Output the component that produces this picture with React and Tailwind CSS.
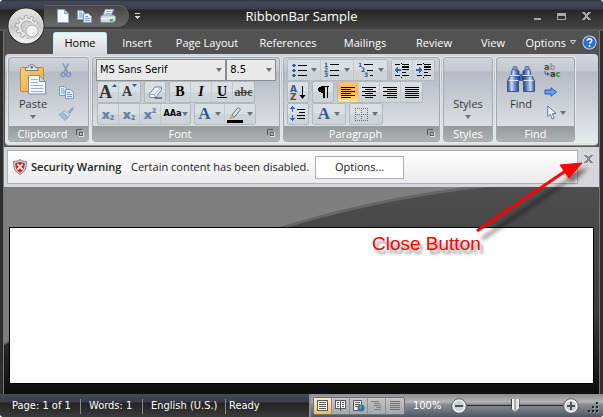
import React from "react";

const UI = "font-['Open_Sans','Noto_Sans',sans-serif]";
const PLAIN = "font-['DejaVu_Sans_Condensed','DejaVu_Sans',sans-serif]";
const SERIF = "font-['Liberation_Serif',serif]";

/* ---------- small building blocks ---------- */

function Arrow({ className = "fill-[#6b7076]" }) {
  return (
    <svg width="6" height="4" viewBox="0 0 6 4" className={className}>
      <path d="M0 0h6L3 4z" />
    </svg>
  );
}

function Bars({ rows, color = "#000" }) {
  return rows.map(([x, y, w]) => (
    <rect key={`${x}-${y}`} x={x} y={y} width={w} height="1" fill={color} />
  ));
}

function Crisp({ w, h, children }) {
  return (
    <svg width={w} height={h} viewBox={`0 0 ${w} ${h}`} shapeRendering="crispEdges">
      {children}
    </svg>
  );
}

function Cluster({ children }) {
  return (
    <div className="flex h-[22px] divide-x divide-[#c3cacd] rounded-[2px] border border-[#b3babf] bg-linear-to-b from-[#d9dfe2] from-50% to-[#cdd5d8] to-50%">
      {children}
    </div>
  );
}

function Tool({ label, width = "w-[21px]", active = false, children }) {
  return (
    <button
      type="button"
      aria-label={label}
      aria-pressed={active}
      className={`flex h-5 items-center justify-center gap-1 ${width} ${
        active ? "bg-linear-to-b from-[#fbc27c] via-[#fdb259] to-[#ffe68f]" : ""
      }`}
    >
      {children}
    </button>
  );
}

function Launcher({ label }) {
  return (
    <button type="button" aria-label={label} className="absolute right-1 top-[3px]">
      <Crisp w={8} h={8}>
        <path d="M0 0h6v1H1v5H0z" fill="#5b5f61" />
        <path d="M3 3h5v5H3z" fill="#e5e8e8" />
        <path d="M3 3h4v4H3z" fill="#5b5f61" />
        <path d="M4 4h2v2H4z" fill="#b9bcbc" />
      </Crisp>
    </button>
  );
}

function Group({ title, width, launcher, children }) {
  return (
    <section
      aria-label={title}
      className={`flex h-[85px] shrink-0 flex-col overflow-hidden rounded-[3px] border border-[#a3a8ad] shadow-[0_0_0_1px_#e4e7ea] ${width}`}
    >
      <div className="flex-1">{children}</div>
      <div className="relative flex h-[15px] items-center justify-center bg-linear-to-b from-[#979a9a] to-[#aeb1b1] text-[11px] leading-[15px] text-white">
        <span className={launcher ? "pr-3" : ""}>{title}</span>
        {launcher && <Launcher label={`${title} settings`} />}
      </div>
    </section>
  );
}

/* ---------- drawings ---------- */

function Orb() {
  return (
    <svg width="38" height="38" viewBox="0 0 38 38">
      <defs>
        <linearGradient id="orb" x1="0" y1="0" x2="0" y2="1">
          <stop offset="0" stopColor="#e4e4e4" />
          <stop offset=".48" stopColor="#cdcdcd" />
          <stop offset=".52" stopColor="#c4c4c4" />
          <stop offset="1" stopColor="#f6f6f6" />
        </linearGradient>
      </defs>
      <circle cx="19" cy="19" r="18.5" fill="#2a2a2a" />
      <circle cx="19" cy="19" r="17" fill="url(#orb)" stroke="#f4f4f4" />
      <circle cx="20" cy="20" r="9.500" fill="none" stroke="#9a9a9a" strokeWidth="4.500" strokeDasharray="3 2.970" />
      <circle cx="20" cy="20" r="7.500" fill="none" stroke="#9a9a9a" strokeWidth="3.500" />
      <circle cx="20" cy="20" r="9.500" fill="none" stroke="#ececec" strokeWidth="3.200" strokeDasharray="2 3.970" strokeDashoffset="-.5" />
      <circle cx="20" cy="20" r="7.500" fill="none" stroke="#ececec" strokeWidth="2" />
      <circle cx="25" cy="24" r="8" fill="#d6d6d6" />
      <circle cx="25" cy="24" r="6" fill="#f3f3f3" stroke="#9a9a9a" strokeWidth=".8" />
    </svg>
  );
}

function PageIcon() {
  return (
    <svg width="12" height="14" viewBox="0 0 12 14">
      <path d="M.5.5h7l4 4v9H.5z" fill="#f5f8fd" stroke="#8ea3bd" />
      <path d="M7.5.5v4h4z" fill="#c3d0e2" stroke="#8ea3bd" />
    </svg>
  );
}

function CopyIcon() {
  return (
    <svg width="15" height="13" viewBox="0 0 15 13">
      <path d="M.5.5h5l2.500 2.500v6.500H.5z" fill="#e6edf8" stroke="#7f98c2" />
      <path d="M2 3h3M2 5h4M2 7h4" stroke="#7f98c2" />
      <path d="M6.500 3.500h5l3 3v6h-8z" fill="#e6edf8" stroke="#7f98c2" />
      <path d="M8 6.500h3M8 8.500h5M8 10.500h5" stroke="#7f98c2" />
    </svg>
  );
}

function PrinterIcon() {
  return (
    <svg width="16" height="14" viewBox="0 0 16 14">
      <path d="M5.500.5h8l-2.500 6H3z" fill="#f7f9fc" stroke="#9fb0c6" />
      <path d="M6.500 2.500h5M5.500 4.500h5" stroke="#8aa0be" />
      <path d="M2.500 6h11l2 2v3.500L13 13.500H1.500l-1-1V8z" fill="#cfd8e4" stroke="#8294ab" />
      <path d="M1 9.500h12l2-2" fill="none" stroke="#f5f8fb" />
      <rect x="10" y="10" width="3" height="2.500" fill="#26c51c" />
    </svg>
  );
}

function PasteIcon() {
  return (
    <svg width="28" height="31" viewBox="0 0 28 31">
      <defs>
        <linearGradient id="board" x1="0" y1="0" x2="1" y2="1">
          <stop offset="0" stopColor="#f8cf7c" />
          <stop offset="1" stopColor="#e8a93c" />
        </linearGradient>
      </defs>
      <rect x="1.500" y="3.500" width="23" height="24" rx="1.500" fill="url(#board)" stroke="#c08a37" />
      <path d="M6.500 6.500V4l3-1c.5-3.300 6-3.300 6.500 0l3 1v2.500z" fill="#dfe3e8" stroke="#6e7680" />
      <circle cx="12.800" cy="3.200" r="1.200" fill="#555c66" />
      <path d="M9.500 11.500h11l6 6v12.500h-17z" fill="#f7f9fc" stroke="#7f8ea6" />
      <path d="M20.500 11.500v6h6z" fill="#cbd7e8" stroke="#7f8ea6" />
      <path d="M12 15.500h7M12 18.500h7M12 21.500h12M12 24.500h12M12 27.500h12" stroke="#9fb3d2" />
    </svg>
  );
}

function CutIcon() {
  return (
    <svg width="12" height="15" viewBox="0 0 12 15" fill="none" stroke="#8195b8">
      <path d="M3 .5 7.500 9.500M8.500.5 4 9.500" strokeWidth="1.600" />
      <circle cx="3" cy="11.500" r="2" strokeWidth="1.500" />
      <circle cx="8.500" cy="11.500" r="2" strokeWidth="1.500" />
    </svg>
  );
}

function BrushIcon() {
  return (
    <svg width="16" height="14" viewBox="0 0 16 14">
      <path d="M10.500 4.500 14.500.5l1 1-3.500 4.500z" fill="#9fb1cf" stroke="#7d92b8" />
      <path d="M6 3.500 12 8l-1.500 2L4.500 5.500z" fill="#dfe7f4" stroke="#7d92b8" strokeWidth=".8" />
      <path d="M4.500 5.500 10.500 10 7 13.500.5 7.500z" fill="#a9badb" stroke="#8ea3c8" strokeWidth=".8" />
    </svg>
  );
}

function Binoculars() {
  const side = (
    <>
      <path d="M5 3.500 9 3l3 2v7H3.500z" fill="url(#tube)" stroke="#304a80" strokeWidth=".7" />
      <rect x="6" y=".5" width="4" height="3.500" rx="1.200" fill="#7f9fd8" stroke="#304a80" strokeWidth=".6" />
      <path d="M3 10h9.500v4L11.500 15v10.500h-11V15z" fill="url(#tube)" stroke="#2a4377" strokeWidth=".8" />
      <path d="M3 9.500h9.500M1.500 14.500h10" stroke="#dbe6f8" strokeWidth="1" />
    </>
  );
  return (
    <svg width="28" height="27" viewBox="0 0 28 27">
      <defs>
        <linearGradient id="tube">
          <stop offset="0" stopColor="#31508f" />
          <stop offset=".35" stopColor="#c9daf5" />
          <stop offset=".65" stopColor="#5d82c4" />
          <stop offset="1" stopColor="#22396c" />
        </linearGradient>
      </defs>
      <rect x="11" y="8" width="6" height="7" fill="#4267ab" />
      {side}
      <g transform="translate(28 0) scale(-1 1)">{side}</g>
    </svg>
  );
}

function Shield() {
  return (
    <svg width="14" height="16" viewBox="0 0 14 16">
      <path d="M7 .5C9 2 11 2.500 13.500 2.500c0 6-1 10-6.500 13C1.500 12.500.5 8.500.5 2.500 3 2.500 5 2 7 .5z" fill="#d9dcdf" stroke="#7b7f83" />
      <path d="M7 2.500c1.600 1 3 1.300 4.800 1.400C11.700 8.500 10.800 11.500 7 13.800 3.200 11.500 2.300 8.500 2.200 3.900 4 3.800 5.400 3.500 7 2.500z" fill="#d12a22" />
      <path d="m4.300 5 5.400 5.600M9.700 5l-5.400 5.600" stroke="#fff" strokeWidth="1.700" />
    </svg>
  );
}

function CloseGlyph({ color }) {
  return (
    <svg width="9" height="8" viewBox="0 0 9 8">
      <path d="M0 0h3v1h1v1h1V1h1V0h3v1H8v1H7v1H6v2h1v1h1v1h1v1H6V7H5V6H4v1H3v1H0V7h1V6h1V5h1V3H2V2H1V1H0z" fill={color} />
    </svg>
  );
}

function HelpIcon() {
  return (
    <svg width="15" height="15" viewBox="0 0 15 15">
      <circle cx="7.500" cy="7.500" r="7" fill="#dfe8f7" />
      <circle cx="7.500" cy="7.500" r="5.800" fill="#2f6cdb" stroke="#1a4bb0" strokeWidth=".6" />
      <path d="M5.300 5.800c.2-2.600 4.600-2.500 4.400 0-.1 1.500-2.100 1.400-2.100 3" fill="none" stroke="#fff" strokeWidth="1.600" />
      <circle cx="7.600" cy="10.900" r="1" fill="#fff" />
    </svg>
  );
}

/* ---------- title bar and tabs ---------- */

function TitleBar() {
  return (
    <header className="grid h-[31px] grid-cols-[1fr_auto_1fr] items-center border-b-2 border-[#585858] bg-[linear-gradient(#33353b_0,#42465a_2px,#3a3e49_9px,#262626_10px,#424242_28px)]">
      <div className="flex items-center pt-[3px]">
        <div className="ml-11 flex h-[22px] w-[85px] items-center gap-2 rounded-r-full border border-[#606060] border-l-transparent bg-linear-to-b from-[#464646] to-[#6a6a6a] pl-3">
          <button type="button" aria-label="New"><PageIcon /></button>
          <button type="button" aria-label="Copy"><CopyIcon /></button>
          <button type="button" aria-label="Print"><PrinterIcon /></button>
        </div>
        <button type="button" aria-label="Customize toolbar" className="ml-[6px]">
          <Crisp w={5} h={7}>
            <path d="M0 0h5v1H0z" fill="#d6d6d6" />
            <path d="M0 3h5v1H4v1H3v1H2V5H1V4H0z" fill="#d6d6d6" />
          </Crisp>
        </button>
      </div>
      <h1 className="pt-[3px] text-[13px] leading-4 text-white">RibbonBar Sample</h1>
      <div className="flex items-center justify-end gap-4 pr-3 pt-[3px]">
        <button type="button" aria-label="Minimize" className="flex h-2 items-end">
          <Crisp w={7} h={2}><path d="M0 0h7v2H0z" fill="#a5abb3" /></Crisp>
        </button>
        <button type="button" aria-label="Maximize">
          <Crisp w={9} h={7}><path d="M0 0h9v7H0zM1 3v3h7V3z" fillRule="evenodd" fill="#a5abb3" /></Crisp>
        </button>
        <button type="button" aria-label="Close window"><CloseGlyph color="#a5abb3" /></button>
      </div>
    </header>
  );
}

const TABS = [
  ["Insert", "w-[60px]"],
  ["Page Layout", "w-[80px]"],
  ["References", "w-[82px]"],
  ["Mailings", "w-[72px]"],
  ["Review", "w-[66px]"],
  ["View", "w-[52px]"],
];

function Tabs() {
  return (
    <nav className="flex h-[23px] items-end bg-[#525252] pl-[49px] text-[11px] text-white">
      <button type="button" className="h-[22px] w-[54px] rounded-t-[3px] border border-b-0 border-[#b9f0f7] bg-linear-to-b from-[#f3f5f7] to-[#d5d8de] text-black">
        Home
      </button>
      {TABS.map(([name, width]) => (
        <button key={name} type="button" className={`h-[22px] pt-px ${width}`}>{name}</button>
      ))}
      <div className="flex flex-1 items-center justify-end gap-[6px] pb-[3px] pr-[2px]">
        <button type="button" className="flex items-center gap-1">
          Options
          <svg width="6" height="5" viewBox="0 0 6 5"><path d="M.5.5h5L3 4z" fill="none" stroke="#ddd" strokeWidth=".9" /></svg>
        </button>
        <button type="button" aria-label="Help"><HelpIcon /></button>
      </div>
    </nav>
  );
}

/* ---------- ribbon ---------- */

function Combo({ label, value, width }) {
  return (
    <label className={`relative flex h-[22px] ${width}`}>
      <span className="sr-only">{label}</span>
      <select className={`h-[22px] w-full appearance-none border border-[#8b8f93] bg-[#e9e9e9] pl-[3px] text-[11px] leading-5 text-black ${PLAIN}`}>
        <option>{value}</option>
      </select>
      <span className="pointer-events-none absolute right-1 top-[9px]"><Arrow /></span>
    </label>
  );
}

function BigButton({ label, menu, children }) {
  return (
    <button type="button" className="flex flex-col items-center text-[11px] leading-4 text-[#3b3b3b]">
      <span className="flex h-[34px] items-center">{children}</span>
      <span>{label}</span>
      {menu && <span className="flex h-[9px] items-center"><Arrow /></span>}
    </button>
  );
}

function Clipboard() {
  return (
    <Group title="Clipboard" width="w-[81px]" launcher>
      <div className="flex justify-between pl-[10px] pr-[14px] pt-1">
        <BigButton label="Paste" menu><PasteIcon /></BigButton>
        <div className="flex flex-col items-center gap-2 pt-px">
          <button type="button" aria-label="Cut"><CutIcon /></button>
          <button type="button" aria-label="Copy selection"><CopyIcon /></button>
          <button type="button" aria-label="Format painter"><BrushIcon /></button>
        </div>
      </div>
    </Group>
  );
}

function Script({ sup = false }) {
  return (
    <span className="flex text-[13px] font-extrabold leading-4 text-[#6a7fac]">
      x<span className={`text-[7px] leading-[8px] ${sup ? "pt-px" : "pt-2"}`}>2</span>
    </span>
  );
}

function SizeA({ grow = false }) {
  return (
    <span className={`flex items-start font-bold leading-4 text-[#333] ${SERIF} ${grow ? "text-[18px]" : "text-[14px]"}`}>
      A
      <svg width="5" height="3" viewBox="0 0 5 3"><path d={grow ? "M0 3h5L2.500 0z" : "M0 0h5L2.500 3z"} fill="#2d57b5" /></svg>
    </span>
  );
}

function Pen() {
  return (
    <svg width="16" height="17" viewBox="0 0 16 17">
      <path d="m5 9 6-7.500 2.500 2L7.500 11z" fill="#d8e3f3" stroke="#54698f" strokeWidth=".9" />
      <path d="m5 9 2.500 2L3 12.500z" fill="#f5d35a" stroke="#8a7a3a" strokeWidth=".6" />
      <path d="M0 14h16v3H0z" />
    </svg>
  );
}

function Eraser() {
  return (
    <svg width="15" height="13" viewBox="0 0 15 13">
      <path d="M1 8.500 7 1h6.500v3L7.500 11.500H2z" fill="#f3f7fc" stroke="#6c83ab" />
      <path d="M1 8.500h5.500L13 1.500M6.500 8.500l1 3" fill="none" stroke="#8fa5cb" />
      <path d="M7 12h7" stroke="#222" />
    </svg>
  );
}

function ColorA() {
  return <span className={`text-[17px] font-bold leading-4 text-[#34589c] ${SERIF}`}>A</span>;
}

function FontGroup() {
  const letter = `text-[14px] font-bold leading-4 text-black ${SERIF}`;
  return (
    <Group title="Font" width="w-[188px]" launcher>
      <div className="flex px-[3px] pt-px">
        <Combo label="Font name" value="MS Sans Serif" width="w-[131px]" />
        <Combo label="Font size" value="8.5" width="w-[50px]" />
      </div>
      <div className="flex gap-[3px] px-1">
        <Cluster>
          <Tool label="Grow font"><SizeA grow /></Tool>
          <Tool label="Shrink font"><SizeA /></Tool>
        </Cluster>
        <Cluster><Tool label="Clear formatting" width="w-5"><Eraser /></Tool></Cluster>
        <Cluster>
          <Tool label="Bold"><span className={letter}>B</span></Tool>
          <Tool label="Italic"><span className={`italic ${letter}`}>I</span></Tool>
          <Tool label="Underline"><span className={`underline ${letter}`}>U</span></Tool>
          <Tool label="Strikethrough"><span className={`text-[12px] font-bold leading-4 text-[#444] line-through ${SERIF}`}>abc</span></Tool>
        </Cluster>
      </div>
      <div className="flex gap-[3px] px-1">
        <Cluster>
          <Tool label="Subscript"><Script /></Tool>
          <Tool label="Small subscript"><Script /></Tool>
          <Tool label="Superscript"><Script sup /></Tool>
          <Tool label="Change case" width="w-[29px]">
            <span className="-mr-1 font-['DejaVu_Sans_Condensed',sans-serif] text-[9px] font-bold text-black">AAa</span>
            <Arrow />
          </Tool>
        </Cluster>
        <Cluster>
          <Tool label="Text color" width="w-[30px]"><ColorA /><Arrow /></Tool>
          <Tool label="Highlight color" width="w-[30px]"><Pen /><Arrow /></Tool>
        </Cluster>
      </div>
    </Group>
  );
}

function NumberedIcon({ nested = false }) {
  const digits = nested ? [[0, 5], [3, 10], [6, 15]] : [[0, 5], [0, 10], [0, 15]];
  return (
    <svg width="16" height="16" viewBox="0 0 16 16">
      {digits.map(([x, y], i) => (
        <text key={y} x={x} y={y} className="fill-[#2c55ac] font-['DejaVu_Sans',sans-serif] text-[6px] font-bold">{i + 1}</text>
      ))}
      <g shapeRendering="crispEdges">
        <Bars rows={nested ? [[6, 2, 9], [9, 8, 6], [12, 13, 3]] : [[6, 2, 9], [6, 8, 9], [6, 13, 9]]} />
      </g>
    </svg>
  );
}

function IndentIcon({ right = false }) {
  return (
    <Crisp w={16} h={15}>
      <Bars rows={[[1, 1, 5], [8, 1, 7], [1, 12, 5], [8, 12, 7], [8, 6, 7], [8, 9, 4], [7, 14, 1]]} />
      <path d="M8 3h7v2H8zM7 0h1v1H7z" fill="#000" />
      <path d={right ? "M0 6h3V4h1v1h1v1h1v2H5v1H4v1H3V8H0z" : "M7 6H4V4H3v1H2v1H1v2h1v1h1v1h1V8h3z"} fill="#3164c8" />
    </Crisp>
  );
}

function AlignIcon({ kind }) {
  const short = { left: [1, 10], center: [4, 8], right: [5, 10], full: [1, 14] }[kind];
  return (
    <Crisp w={16} h={11}>
      <Bars
        rows={[0, 2, 4, 6, 8, 10].map((y, i) => {
          const [x, w] = i % 2 ? short : [1, 14];
          return [x, y, w];
        })}
      />
    </Crisp>
  );
}

function Paragraph() {
  return (
    <Group title="Paragraph" width="w-[157px]" launcher>
      <div className="flex gap-[3px] px-[3px] pt-px">
        <Cluster>
          <Tool label="Bullets" width="w-[33px]">
            <Crisp w={15} h={14}>
              <path d="M1 1h2v1h1v1H3v1H1V3H0V2h1zM1 6h2v1h1v1H3v1H1V8H0V7h1zM1 11h2v1h1v1H3v1H1v-1H0v-1h1z" fill="#2c55ac" />
              <Bars rows={[[6, 2, 9], [6, 7, 9], [6, 12, 9]]} />
            </Crisp>
            <Arrow />
          </Tool>
          <Tool label="Numbering" width="w-[33px]"><NumberedIcon /><Arrow /></Tool>
          <Tool label="Multilevel list" width="w-[33px]"><NumberedIcon nested /><Arrow /></Tool>
        </Cluster>
        <Cluster>
          <Tool label="Decrease indent"><IndentIcon /></Tool>
          <Tool label="Increase indent"><IndentIcon right /></Tool>
        </Cluster>
      </div>
      <div className="flex gap-[3px] px-[3px]">
        <Cluster>
          <Tool label="Sort" width="w-5">
            <svg width="16" height="17" viewBox="0 0 16 17">
              <text x="0" y="8" className="fill-[#2d57a8] font-['DejaVu_Sans',sans-serif] text-[9px] font-bold">A</text>
              <text x="0" y="16" className="fill-[#9c2f2c] font-['DejaVu_Sans',sans-serif] text-[9px] font-bold">Z</text>
              <path d="M12 2h1v9h2.500l-3 4-3-4H12z" />
            </svg>
          </Tool>
        </Cluster>
        <Cluster>
          <Tool label="Show marks" width="w-5">
            <Crisp w={11} h={12}>
              <path d="M3 0h8v1h-1v11H9V1H7v11H5V7H3V6H1V5H0V2h1V1h2z" />
            </Crisp>
          </Tool>
        </Cluster>
        <Cluster>
          <Tool label="Align left" active><AlignIcon kind="left" /></Tool>
          <Tool label="Center"><AlignIcon kind="center" /></Tool>
          <Tool label="Align right"><AlignIcon kind="right" /></Tool>
          <Tool label="Justify"><AlignIcon kind="full" /></Tool>
        </Cluster>
      </div>
      <div className="flex gap-[3px] px-[3px]">
        <Cluster>
          <Tool label="Line spacing" width="w-5">
            <Crisp w={16} h={16}>
              <path d="M2 0h1v1h1v1h1v1H3v3H2V3H0V2h1V1h1zM2 15h1v-1h1v-1h1v-1H3V9H2v3H0v1h1v1h1z" fill="#3164c8" />
              <Bars rows={[[7, 3, 8], [9, 6, 6], [7, 9, 8], [7, 12, 8]]} />
            </Crisp>
          </Tool>
        </Cluster>
        <Cluster><Tool label="Shading" width="w-[32px]"><ColorA /><Arrow /></Tool></Cluster>
        <Cluster>
          <Tool label="Borders" width="w-[32px]">
            <svg width="13" height="13" viewBox="0 0 13 13">
              <path d="M0 .5h13M0 6.500h13M0 12.500h13M.5 0v13M6.500 0v13M12.500 0v13" stroke="#666b70" strokeDasharray="1 1" />
            </svg>
            <Arrow />
          </Tool>
        </Cluster>
      </div>
    </Group>
  );
}

function FindGroup() {
  return (
    <Group title="Find" width="w-[79px]">
      <div className="flex justify-between pl-2.5 pr-2 pt-1">
        <BigButton label="Find"><Binoculars /></BigButton>
        <div className="flex flex-col gap-2">
          <button type="button" aria-label="Replace" className="h-[17px]">
            <svg width="18" height="17" viewBox="0 0 18 17" className="font-['DejaVu_Sans_Condensed',sans-serif] text-[9px] font-bold">
              <text x="0" y="8" fill="#444">a<tspan fill="#999">b</tspan></text>
              <text x="6" y="15" fill="#333">a<tspan fill="#159a20">c</tspan></text>
              <path d="M1 9v3h3" fill="none" stroke="#3c63b5" />
              <path d="m3 10 3 2-3 2z" fill="#3c63b5" />
            </svg>
          </button>
          <button type="button" aria-label="Go to">
            <svg width="14" height="10" viewBox="0 0 14 10">
              <path d="M1 3h6V.8L12.500 5 7 9.200V7H1z" fill="#6f9cf0" stroke="#2b57b8" />
            </svg>
          </button>
          <button type="button" aria-label="Select" className="flex items-center gap-[3px] pl-[3px]">
            <svg width="10" height="15" viewBox="0 0 10 15">
              <path d="M.8 1v10.500l2.500-2.300 2 4.800 2-.9-2-4.500H9z" fill="#f8fbff" stroke="#5d7aa8" />
            </svg>
            <Arrow />
          </button>
        </div>
      </div>
    </Group>
  );
}

function Ribbon() {
  return (
    <div className="bg-[#525252] px-px pb-[2px]">
      <div className="flex h-[91px] gap-[3px] rounded-[4px] border-b-2 border-[#dfe2e4] bg-[linear-gradient(#d4d7de_0,#c4c8d0_17px,#b5bac4_18px,#e4ebec_88px)] px-[3px] pt-[3px] shadow-[0_1px_0_#8b8b8b]">
        <Clipboard />
        <FontGroup />
        <Paragraph />
        <Group title="Styles" width="w-[50px]">
          <div className="flex justify-center pt-1"><BigButton label="Styles" menu /></div>
        </Group>
        <FindGroup />
      </div>
    </div>
  );
}

/* ---------- message bar, document, callout ---------- */

function MessageBar() {
  return (
    <div role="alert" className="flex h-10 items-start bg-[#d4d7db] py-[3px] pl-[3px] text-[11px] text-[#222]">
      <div className="flex h-[34px] flex-1 items-center border border-[#adb0b4] bg-linear-to-b from-white to-[#ebebeb] pl-[5px]">
        <Shield />
        <strong className="ml-1 w-[88px] whitespace-nowrap font-semibold">Security Warning</strong>
        <span className="ml-3">Certain content has been disabled.</span>
        <button type="button" className="ml-[6px] h-[23px] w-[89px] border border-[#adb0b4] bg-white">Options...</button>
      </div>
      <button type="button" aria-label="Close message" className="flex w-[21px] justify-center pt-[5px]">
        <CloseGlyph color="#85898e" />
      </button>
    </div>
  );
}

function Workspace() {
  return (
    <main className="relative flex flex-1 flex-col bg-linear-to-b from-[#4e4e4e] via-[#3c3c3c] via-60% to-[#0e0e0e] px-[5px] pb-[10px] pt-10">
      <svg className="absolute inset-0 h-full w-full" viewBox="0 0 594 207" preserveAspectRatio="none" aria-hidden="true">
        <path d="M0 0H486Q250 24 0 158Z" fill="#666" />
        <path d="M0 0H462Q240 27 0 156Z" fill="#7f7f7f" />
      </svg>
      <div className="relative flex-1 border border-black bg-white" aria-label="Document" />
    </main>
  );
}

function Callout() {
  return (
    <div className="pointer-events-none absolute right-[10px] top-[156px] h-[100px] w-[221px]">
      <svg width="221" height="100" viewBox="0 0 221 100" aria-hidden="true">
        <defs>
          <filter id="soft" x="-20%" y="-20%" width="140%" height="140%"><feGaussianBlur stdDeviation="2" /></filter>
        </defs>
        <g transform="translate(5 6)" opacity=".5" filter="url(#soft)">
          <path d="M105 77 193 17" stroke="#000" strokeWidth="3" />
          <path d="M211 6 195 22 188 11z" />
        </g>
        <path d="M105 75 195 14" stroke="#f00" strokeWidth="3" />
        <path d="M210 7 197 22 188 9z" fill="#f00" stroke="#f00" />
      </svg>
      <p className="absolute bottom-0 left-0 font-['Liberation_Sans',Arial,sans-serif] text-[19px] leading-6 text-[#f00] [text-shadow:3px_4px_3px_rgba(0,0,0,0.45)]">
        Close Button
      </p>
    </div>
  );
}

/* ---------- status bar ---------- */

function ViewButton({ label, active, children }) {
  return (
    <button
      type="button"
      aria-label={label}
      aria-pressed={!!active}
      className={`flex w-[18px] items-center justify-center ${active ? "bg-linear-to-b from-[#fdebc8] to-[#f8b95c]" : ""}`}
    >
      {children}
    </button>
  );
}

function Zoomer({ label, plus }) {
  return (
    <button type="button" aria-label={label}>
      <svg width="16" height="16" viewBox="0 0 16 16">
        <circle cx="8" cy="8" r="7.300" fill="#e4e6e8" stroke="#5a5f66" />
        <circle cx="8" cy="8" r="5.800" fill="#cfd3d7" stroke="#fff" strokeWidth=".8" />
        <path d={plus ? "M4 8h8M8 4v8" : "M4 8h8"} stroke="#4b525b" strokeWidth="2" />
      </svg>
    </button>
  );
}

function StatusBar() {
  const cell = "flex items-center border-r border-[#8a8a8a]";
  return (
    <footer className={`flex h-[23px] bg-[linear-gradient(#454959_0,#3a3d48_8px,#232323_9px,#3a3a3a_100%)] text-[11px] text-white ${PLAIN}`}>
      <div className="flex pb-[3px] pt-[5px]">
        <span className={`${cell} w-[81px] pl-3`}>Page: 1 of 1</span>
        <span className={`${cell} w-[62px] pl-2`}>Words: 1</span>
        <span className={`${cell} w-[83px] pl-2`}>English (U.S.)</span>
        <span className="flex items-center pl-[3px]">Ready</span>
      </div>
      <div className="ml-auto flex w-[294px] items-center border-l-2 border-[#8b8b8b] bg-[linear-gradient(#8c8c8e_0,#b4b6b9_8px,#8d9196_10px,#4c5763_100%)] pl-[2px]">
        <div className="flex h-[18px] w-[92px] divide-x divide-[#8b8f93] overflow-hidden rounded-[2px] border border-[#6f7276] bg-linear-to-b from-[#c4c6c8] to-[#a5a8ac]">
          <ViewButton label="Print layout" active>
            <Crisp w={11} h={11}>
              <path d="M0 0h11v11H0z" fill="#55595e" />
              <path d="M1 1h9v9H1z" fill="#fff" />
              <Bars color="#55595e" rows={[[2, 2, 7], [2, 4, 7], [2, 6, 7], [2, 8, 7]]} />
            </Crisp>
          </ViewButton>
          <ViewButton label="Reading view">
            <Crisp w={11} h={11}>
              <path d="M0 0h11v9H6v2H5V9H0z" fill="#55595e" />
              <path d="M1 1h4v7H1zM6 1h4v7H6z" fill="#fff" />
              <Bars color="#55595e" rows={[[2, 2, 2], [7, 2, 2], [2, 4, 2], [7, 4, 2], [2, 6, 2], [7, 6, 2]]} />
            </Crisp>
          </ViewButton>
          <ViewButton label="Web layout">
            <svg width="12" height="12" viewBox="0 0 12 12">
              <path d="M.5.5h8v10h-8z" fill="#f3f3f3" stroke="#55595e" />
              <path d="M2 2.500h5M2 4.500h5M2 6.500h3" stroke="#55595e" />
              <circle cx="8" cy="8" r="3.500" fill="#2f6cb8" />
              <path d="M6 7c1-2 3-2 3 0s-2 1-1 3c-1 0-2-1-2-3z" fill="#4fae4a" />
            </svg>
          </ViewButton>
          <ViewButton label="Outline">
            <Crisp w={11} h={10}><Bars color="#7d8185" rows={[[0, 0, 8], [3, 2, 6], [3, 4, 7], [5, 6, 5], [3, 8, 7]]} /></Crisp>
          </ViewButton>
          <ViewButton label="Draft">
            <Crisp w={10} h={10}><Bars color="#6d7175" rows={[[0, 0, 10], [0, 2, 10], [0, 4, 10], [0, 6, 10], [0, 8, 10]]} /></Crisp>
          </ViewButton>
        </div>
        <span className="ml-2 w-[38px] pt-[2px]">100%</span>
        <Zoomer label="Zoom out" />
        <input
          type="range"
          aria-label="Zoom"
          defaultValue={50}
          className="h-4 w-24 appearance-none bg-transparent [&::-webkit-slider-runnable-track]:h-px [&::-webkit-slider-runnable-track]:bg-[#24282d] [&::-webkit-slider-thumb]:mt-[-6px] [&::-webkit-slider-thumb]:h-[13px] [&::-webkit-slider-thumb]:w-[9px] [&::-webkit-slider-thumb]:appearance-none [&::-webkit-slider-thumb]:bg-[linear-gradient(90deg,#444_1px,#f2f2f2_1px,#f2f2f2_3px,#777_4px,#ddd_5px,#f2f2f2_8px,#444_8px)] [&::-webkit-slider-thumb]:[clip-path:polygon(0_0,100%_0,100%_65%,50%_100%,0_65%)]"
        />
        <Zoomer label="Zoom in" plus />
        <span className="ml-auto self-end pb-1 pr-1">
          <Crisp w={11} h={11}>
            <path d="M9 1h2v2H9zM9 5h2v2H9zM5 5h2v2H5zM9 9h2v2H9zM5 9h2v2H5zM1 9h2v2H1z" fill="#b9c0c7" opacity=".5" />
            <path d="M8 0h2v2H8zM8 4h2v2H8zM4 4h2v2H4zM8 8h2v2H8zM4 8h2v2H4zM0 8h2v2H0z" fill="#1d2227" />
          </Crisp>
        </span>
      </div>
    </footer>
  );
}

export default function App() {
  return (
    <div className={`relative flex min-h-screen flex-col overflow-hidden rounded-[4px] bg-[#303030] ${UI}`}>
      <TitleBar />
      <div className="flex flex-1 flex-col border-x-[3px] border-[#2e2e2e]">
        <div className="flex flex-1 flex-col border-x border-[#757575]">
          <Tabs />
          <Ribbon />
          <MessageBar />
          <Workspace />
        </div>
      </div>
      <StatusBar />
      <button type="button" aria-label="Application menu" className="absolute left-[7px] top-[7px]"><Orb /></button>
      <Callout />
    </div>
  );
}
